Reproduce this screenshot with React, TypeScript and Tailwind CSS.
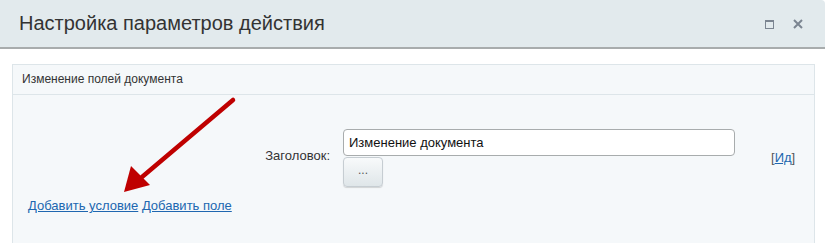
import React from "react";

const font = { fontFamily: '"Liberation Sans", Arial, sans-serif' };

// red pointer arrow drawn over the panel
const Arrow = () => (
  <svg
    className="absolute left-[118px] top-[94px]"
    width="124"
    height="104"
    viewBox="0 0 124 104"
  >
    <path d="M115 6 L24 83" stroke="#bf0000" strokeWidth="4.5" strokeLinecap="round" />
    <polygon points="6,98 13,72 32,91" fill="#bf0000" />
  </svg>
);

export default function App() {
  return (
    <div className="w-[825px] h-[243px] bg-white overflow-hidden relative" style={font}>
      {/* dialog header */}
      <div className="h-[49px] bg-[#e2eaed] border-b-2 border-[#a8acad] rounded-tr-[4px] flex items-center pl-[19px] pr-[22px]">
        <div className="text-[20px] text-[#333] flex-1 pb-[2px]">Настройка параметров действия</div>
        <div className="flex items-center gap-[19px] pt-[1px]">
          <div className="w-[9px] h-[9px] border border-[#7b8591] border-t-2" />
          <svg width="10" height="10" viewBox="0 0 10 10">
            <path d="M1 1 L9 9 M9 1 L1 9" stroke="#7b8591" strokeWidth="2" />
          </svg>
        </div>
      </div>

      {/* activity panel */}
      <div className="ml-[12px] mr-[10px] mt-[15px] border border-[#dde5e9] bg-[#f5f8fa] h-[200px]">
        <div className="h-[30px] border-b border-[#dde5e9] flex items-center pl-[9px] pb-[2px] text-[12px] text-[#333]">
          Изменение полей документа
        </div>
        <div className="pt-[34px]">
          <div className="flex items-center">
            <div className="w-[317px] text-right text-[13px] text-[#333] mb-[4px]">Заголовок:</div>
            <div className="ml-[13px] w-[392px] flex flex-col">
              <input
                readOnly
                value="Изменение документа"
                className="h-[27px] border border-[#a8acad] rounded-[4px] bg-white px-[5px] text-[13px] text-[#111] outline-none"
                style={font}
              />
              <button className="mt-[1px] w-[40px] h-[30px] rounded-[4px] border border-[#c6cdd2] bg-gradient-to-b from-[#f8fafb] to-[#dfe6e9] text-[#555] text-[12px] shadow-[0_1px_1px_rgba(0,0,0,0.15)] leading-none pb-[4px]">
                ...
              </button>
            </div>
            <div className="ml-[36px] text-[13px] text-[#555]">
              [<a href="#" className="text-[#2067b0] underline">Ид</a>]
            </div>
          </div>
          <div className="pl-[15px] mt-[9px] text-[13px]">
            <a href="#" className="text-[#2067b0] underline">Добавить условие</a>{" "}
            <a href="#" className="text-[#2067b0] underline">Добавить поле</a>
          </div>
        </div>
      </div>

      <Arrow />
    </div>
  );
}
